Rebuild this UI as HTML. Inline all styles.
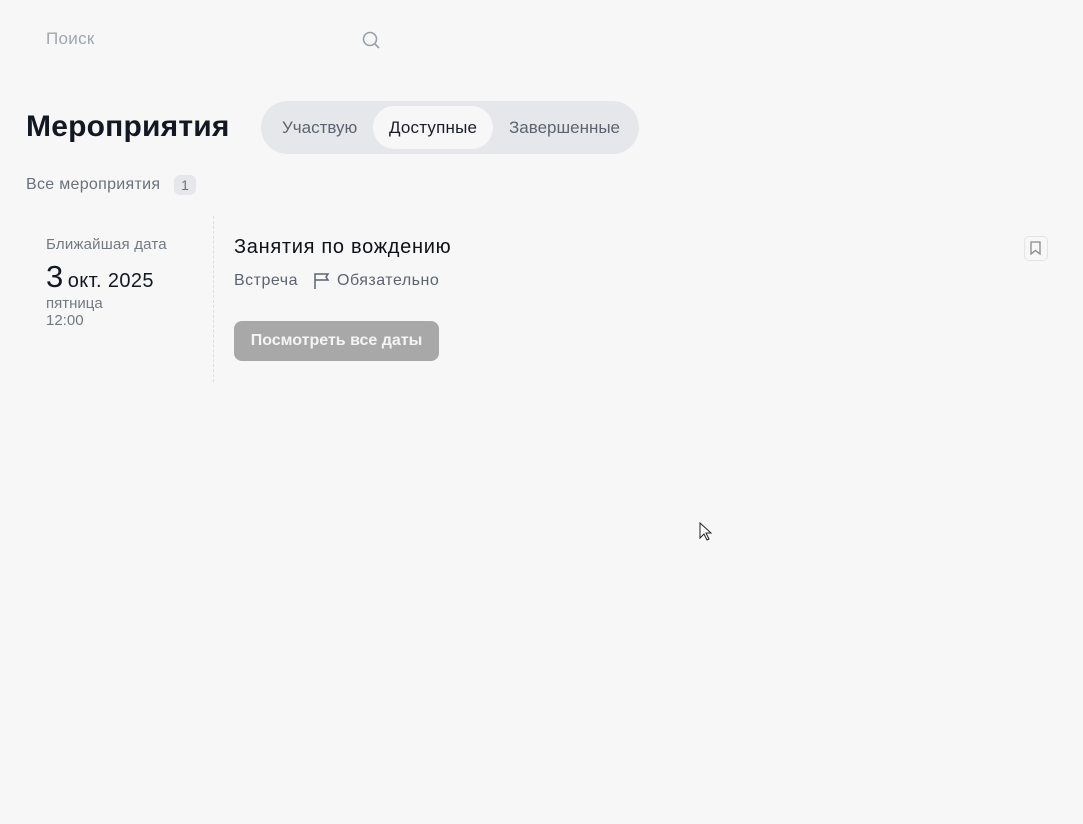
<!DOCTYPE html>
<html><head><meta charset="utf-8"><style>
body{margin:0;width:1083px;height:824px;background:#f7f7f7;font-family:"Liberation Sans",sans-serif;position:relative;overflow:hidden}
.a{position:absolute;white-space:nowrap}
</style></head><body>
<div class="a" style="left:46px;top:29px;font-size:17px;color:#a0a6b0;letter-spacing:0.3px">Поиск</div>
<svg class="a" style="left:361px;top:30px" width="20" height="20" viewBox="0 0 20 20" fill="none" stroke="#9aa0a8" stroke-width="1.6"><circle cx="9" cy="9" r="6.5"/><path d="M14 14l4 4"/></svg>
<div class="a" style="left:26px;top:110px;font-size:30px;font-weight:bold;color:#141824;letter-spacing:0.2px">Мероприятия</div>
<div class="a" style="left:261px;top:101px;width:378px;height:53px;border-radius:27px;background:#e6e7ea"></div>
<div class="a" style="left:373px;top:106px;width:120px;height:43px;border-radius:22px;background:#f7f7f7"></div>
<div class="a" style="left:282px;top:118px;font-size:17px;color:#5d6370">Участвую</div>
<div class="a" style="left:389px;top:118px;font-size:17px;color:#1a1d26;letter-spacing:0.2px">Доступные</div>
<div class="a" style="left:509px;top:118px;font-size:17px;color:#5d6370">Завершенные</div>
<div class="a" style="left:26px;top:176px;font-size:16px;color:#6b717c;letter-spacing:0.3px">Все мероприятия</div>
<div class="a" style="left:174px;top:175px;width:22px;height:20px;border-radius:6px;background:#e6e7ea;font-size:14px;color:#6b717c;text-align:center;line-height:20px">1</div>
<div class="a" style="left:46px;top:236px;font-size:15px;color:#737983;letter-spacing:0.2px">Ближайшая дата</div>
<div class="a" style="left:46px;top:259px;color:#141824"><span style="font-size:31px">3</span> <span style="font-size:20px;letter-spacing:0.4px">окт. 2025</span></div>
<div class="a" style="left:46px;top:295px;font-size:15px;color:#737983;line-height:17px">пятница<br>12:00</div>
<div class="a" style="left:213px;top:216px;height:166px;border-left:1px dashed #dedede"></div>
<div class="a" style="left:234px;top:236px;font-size:20px;color:#0f1118;letter-spacing:0.7px">Занятия по вождению</div>
<div class="a" style="left:234px;top:272px;font-size:16px;color:#5d6370;letter-spacing:0.5px">Встреча</div>
<svg class="a" style="left:313px;top:272px" width="18" height="18" viewBox="0 0 18 18" fill="none" stroke="#5d6370" stroke-width="1.5"><path d="M2 17V2h13l-2 3 2 3H2"/></svg>
<div class="a" style="left:337px;top:272px;font-size:16px;color:#5d6370;letter-spacing:0.5px">Обязательно</div>
<div class="a" style="left:234px;top:321px;width:205px;height:40px;border-radius:8px;background:#a8a8a8;color:#f4f4f4;font-size:16px;font-weight:bold;text-align:center;line-height:40px">Посмотреть все даты</div>
<div class="a" style="left:1024px;top:236px;width:22px;height:23px;border:1px solid #e4e4e4;border-radius:5px"></div>
<svg class="a" style="left:1029px;top:241px" width="13" height="14" viewBox="0 0 13 14" fill="none" stroke="#8a8a8a" stroke-width="1.3"><path d="M2 1h9v12l-4.5-3.5L2 13z"/></svg>
<svg class="a" style="left:699px;top:522px" width="14" height="20" viewBox="0 0 14 20"><path d="M1 1v15l4-4 3 6 2-1-3-6h5z" fill="#fff" stroke="#222" stroke-width="1"/></svg>
</body></html>
